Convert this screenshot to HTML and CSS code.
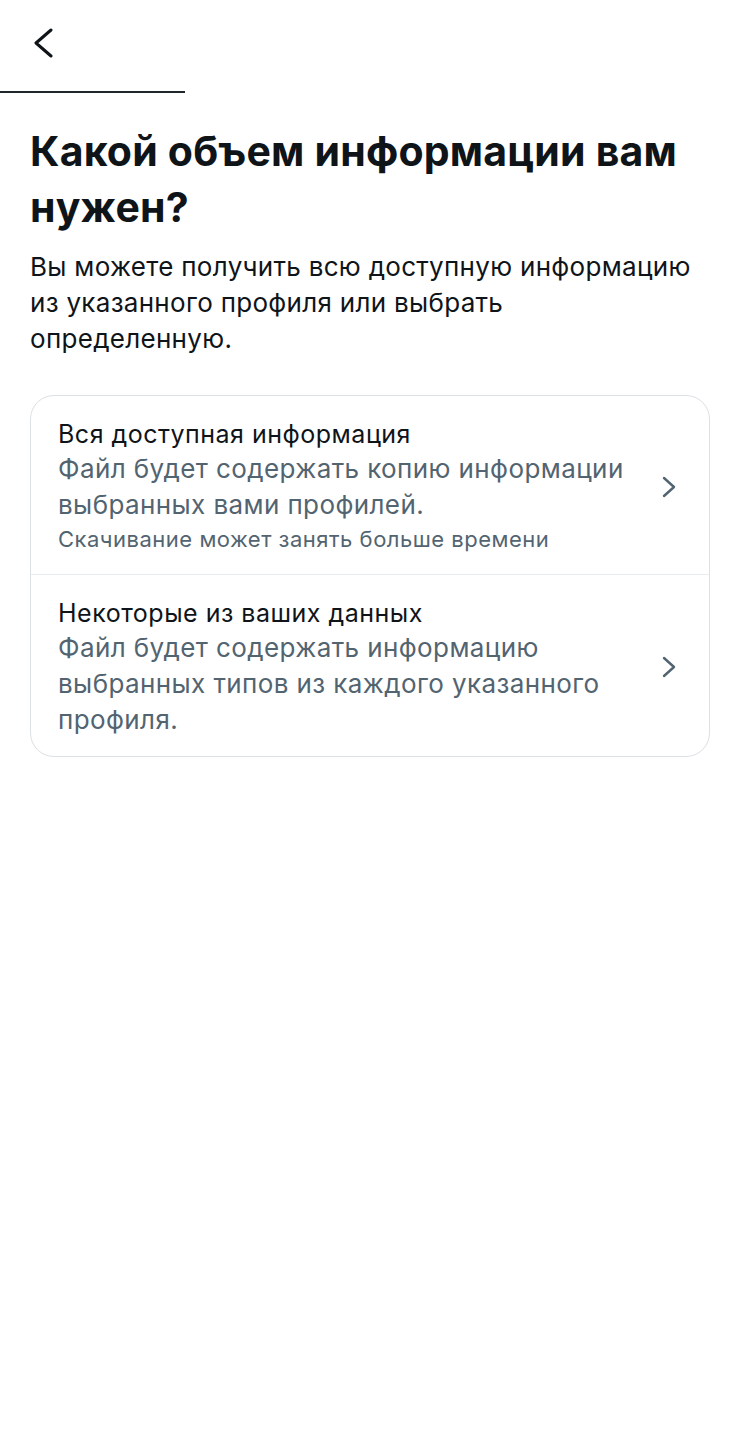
FILE: index.html
```html
<!DOCTYPE html>
<html lang="ru">
<head>
    <meta charset="UTF-8">
    <meta name="viewport" content="width=device-width, initial-scale=1.0">
    <title>Какой объем информации вам нужен?</title>
    <link rel="stylesheet" href="styles.css">
</head>
<body>
    <header class="top-bar">
        <a class="back" href="#" aria-label="Назад">
            <svg width="22" height="30" viewBox="0 0 22 30">
                <path d="M19 2 L4 15 L19 28" fill="none" stroke="#0f1419" stroke-width="3" stroke-linecap="round" stroke-linejoin="round"/>
            </svg>
        </a>
        <div class="progress"></div>
    </header>

    <main class="content">
        <h1>Какой объем информации вам нужен?</h1>
        <p class="lead">Вы можете получить всю доступную информацию из указанного профиля или выбрать определенную.</p>

        <div class="options">
            <a class="option" href="#">
                <div class="option-text">
                    <div class="option-title">Вся доступная информация</div>
                    <div class="option-desc">Файл будет содержать копию информации выбранных вами профилей.</div>
                    <div class="option-note">Скачивание может занять больше времени</div>
                </div>
                <svg class="chevron" width="16" height="22" viewBox="0 0 16 22">
                    <path d="M3 2 L13 11 L3 20" fill="none" stroke="#536471" stroke-width="2.4" stroke-linecap="round" stroke-linejoin="round"/>
                </svg>
            </a>
            <a class="option" href="#">
                <div class="option-text">
                    <div class="option-title">Некоторые из ваших данных</div>
                    <div class="option-desc">Файл будет содержать информацию выбранных типов из каждого указанного профиля.</div>
                </div>
                <svg class="chevron" width="16" height="22" viewBox="0 0 16 22">
                    <path d="M3 2 L13 11 L3 20" fill="none" stroke="#536471" stroke-width="2.4" stroke-linecap="round" stroke-linejoin="round"/>
                </svg>
            </a>
        </div>
    </main>
</body>
</html>
```

FILE: styles.css
```css
body {
    font-family: Inter, "Liberation Sans", Arial, sans-serif;
    margin: 0;
    padding: 0;
    background-color: #fff;
    color: #0f1419;
}

.top-bar {
    padding-top: 28px;
}

.back {
    display: block;
    width: 22px;
    height: 30px;
    margin-left: 32px;
}

.back svg {
    display: block;
}

.progress {
    width: 185px;
    height: 2px;
    margin-top: 33px;
    background-color: #1f272d;
}

.content {
    padding: 0 30px;
}

h1 {
    margin: 30px 0 0;
    font-size: 41px;
    line-height: 56px;
    letter-spacing: 0.2px;
    font-weight: bold;
    color: #0f1419;
}

.lead {
    margin: 14px 0 0;
    font-size: 26px;
    line-height: 36px;
    letter-spacing: 0.3px;
    color: #0f1419;
}

.options {
    margin-top: 38px;
    border: 1px solid #dbe1e5;
    border-radius: 24px;
    overflow: hidden;
}

.option {
    display: flex;
    align-items: center;
    gap: 20px;
    padding: 21px 32px 18px 27px;
    text-decoration: none;
    color: inherit;
}

.option + .option {
    border-top: 1px solid #e8ecef;
}

.option-text {
    flex: 1;
}

.option-title {
    font-size: 25px;
    line-height: 34px;
    letter-spacing: 0.5px;
    color: #0f1419;
}

.option-desc {
    font-size: 26px;
    line-height: 36px;
    letter-spacing: 0.4px;
    color: #536471;
}

.option-note {
    font-size: 22px;
    line-height: 33px;
    letter-spacing: 0.5px;
    color: #536471;
}

.chevron {
    flex-shrink: 0;
    display: block;
}
```
